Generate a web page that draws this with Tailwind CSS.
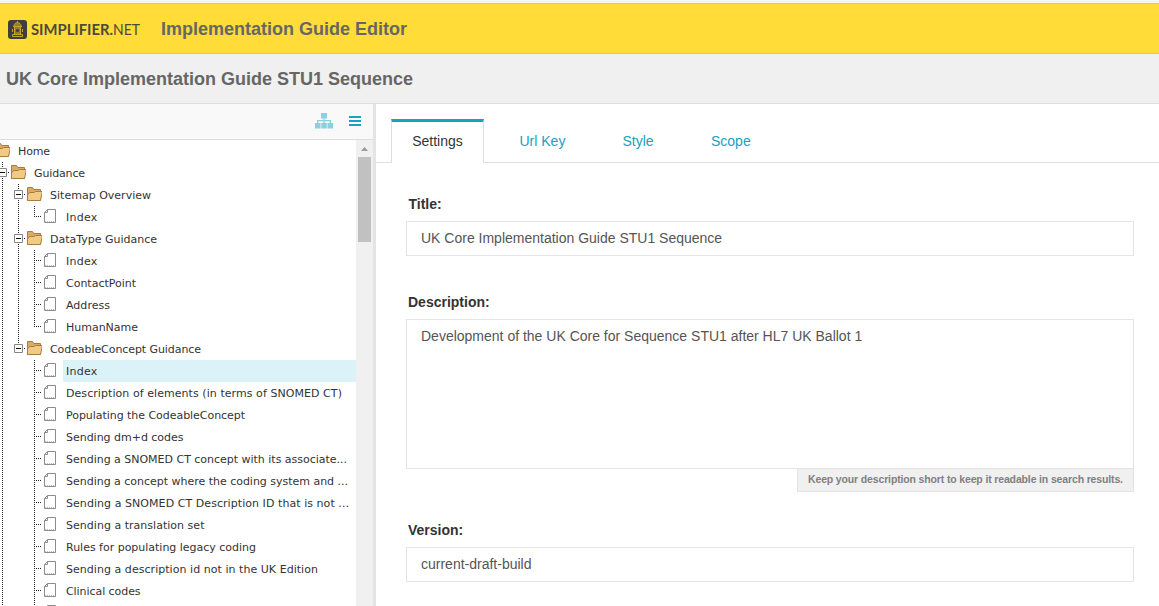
<!DOCTYPE html>
<html lang="en">
<head>
<meta charset="utf-8">
<title>Implementation Guide Editor</title>
<script src="https://cdn.jsdelivr.net/npm/@tailwindcss/browser@4"></script>
</head>
<body class="h-[606px] w-[1159px] overflow-hidden bg-white font-['Liberation_Sans',Arial,sans-serif] text-[#333]">
<svg class="hidden">
  <symbol id="folder" viewBox="0 0 16 22"><path d="M1.500 16.500v-13h5l1.500 2h6.500v11z" fill="#dbab66" stroke="#a67e45"/><path d="M1.500 16.500v-5.500l2-2.500h4.500l1.500-1h7l-2 9z" fill="#f1ca84" stroke="#a67e45"/></symbol>
  <symbol id="doc" viewBox="0 0 16 22"><path d="M5.500 3.500h8v13h-11v-10z" fill="#fff" stroke="#8c8c8c"/><path d="M2.500 6.500h3v-3" fill="none" stroke="#8c8c8c"/><path d="M3 15.500h10" stroke="#bbb" stroke-dasharray="1 1"/></symbol>
  <symbol id="v" viewBox="0 0 16 22"><path d="M8.500 0v22" stroke="#222" stroke-dasharray="1 1" shape-rendering="crispEdges"/></symbol>
  <symbol id="tee" viewBox="0 0 16 22"><path d="M8.500 0v22M10 10.500h6" stroke="#222" stroke-dasharray="1 1" shape-rendering="crispEdges"/></symbol>
  <symbol id="end" viewBox="0 0 16 22"><path d="M8.500 0v11M10 10.500h6" stroke="#222" stroke-dasharray="1 1" shape-rendering="crispEdges"/></symbol>
  <symbol id="box" viewBox="0 0 16 22"><path d="M8.500 0v22M14 10.500h2" stroke="#222" stroke-dasharray="1 1" shape-rendering="crispEdges"/><path d="M4.500 6.500h8v8h-8z" fill="#fff" stroke="#858585"/><path d="M6 10.500h5" stroke="#111"/></symbol>
  <symbol id="boxend" viewBox="0 0 16 22"><path d="M8.500 0v10M14 10.500h2" stroke="#222" stroke-dasharray="1 1" shape-rendering="crispEdges"/><path d="M4.500 6.500h8v8h-8z" fill="#fff" stroke="#858585"/><path d="M6 10.500h5" stroke="#111"/></symbol>
</svg>
<div class="flex h-full flex-col">
  <div class="h-[4px] shrink-0 border-b border-[#c6c4b8] bg-[#f5f5f5]"></div>
  <header class="flex h-[50px] shrink-0 items-center border-b border-[#f0cb26] bg-[#ffdc37] pl-2">
    <svg class="mt-[2px] h-[19px] w-[19px]" viewBox="0 0 19 19"><rect width="19" height="19" rx="3" fill="#3f3e3a"/><path d="M6 6c0-4.500 7-4.500 7 0v8.500H6z" fill="#8f7e2b"/><g fill="none" stroke="#c2a62c"><path d="M6 6c0-4.500 7-4.500 7 0M5 6.500h9M6.500 7v7.500M12.500 7v7.500M4.500 14.500h10v2h-10zM4.500 9v3M14.500 9v3M9.500 1v2"/></g><circle cx="9.500" cy="10.500" r="1.600" fill="#3f3e3a"/></svg>
    <svg class="ml-[4px] h-[20px] w-[109px] overflow-visible font-['Lato',sans-serif] text-[15.500px]" viewBox="0 0 109 20" fill="#4d4a3a"><text x="0" y="16" font-weight="700" textLength="82" lengthAdjust="spacingAndGlyphs">SIMPLIFIER.</text><text x="82" y="16" textLength="27" lengthAdjust="spacingAndGlyphs">NET</text></svg>
    <h1 class="ml-[21px] text-[18px] font-bold leading-[20px] text-[#666]">Implementation Guide Editor</h1>
  </header>
  <div class="flex h-[50px] shrink-0 items-center border-b border-[#dedede] bg-[#f0f0f0] pl-[6px]"><h2 class="text-[18px] font-bold leading-5 text-[#666]">UK Core Implementation Guide STU1 Sequence</h2></div>
  <main class="flex min-h-0 flex-1">
    <aside class="flex w-[376px] shrink-0 flex-col border-r-[3px] border-[#e4e4e4]">
      <div class="flex h-9 shrink-0 items-center border-b border-[#dedede] bg-[#f9f9f9] pl-[315px]">
        <svg class="mt-[-2px] h-[16px] w-[18px]" viewBox="0 0 18 16"><g fill="#8bd0df"><path d="M6 0h6v5.500H6zM0 10h5.500v5.500H0zM6.300 10h5.500v5.500H6.300zM12.500 10H18v5.500h-5.500z"/><path d="M8.500 5h1.200v5H8.500zM2 7h14v1.200H2zM2 7h1.200v3H2zM14.800 7H16v3h-1.200z"/></g></svg>
        <svg class="ml-4 mt-[-2px] h-[10px] w-[12px]" viewBox="0 0 12 10"><path d="M0 0h12v2H0zM0 4h12v2H0zM0 8h12v2H0z" fill="#17a1c3"/></svg>
      </div>
      <div class="flex min-h-0 flex-1">
        <div id="tree" class="w-[356px] overflow-hidden font-['DejaVu_Sans',sans-serif] text-[11px] leading-[24px]"></div>
        <div class="flex w-[17px] flex-col items-center bg-[#f0f0f0] pt-[7px]">
          <svg class="h-[4px] w-[7px]" viewBox="0 0 7 4"><path d="M0 4 3.500 0 7 4z" fill="#9b9b9b"/></svg>
          <div class="mt-[6px] h-[85px] w-[13px] bg-[#c1c1c1]"></div>
        </div>
      </div>
    </aside>
    <section class="min-w-0 flex-1">
      <nav class="flex h-[59px] items-end text-[14px] leading-5 text-[#17a1c3]">
        <div class="h-px w-[15px] bg-[#dedede]"></div>
        <div class="h-[44px] w-[93px] border-x border-t-[3px] border-x-[#dedede] border-t-[#17a1c3] pt-[9px] text-center text-[#333]">Settings</div>
        <div class="flex h-[44px] flex-1 border-b border-[#dedede] pt-3"><span class="ml-[35.500px] w-[103px]">Url Key</span><span class="w-[88.500px]">Style</span><span>Scope</span></div>
      </nav>
      <div class="flex flex-col pl-[30px] pr-[25px] pt-[31px] text-[14px] leading-5 text-[#555]">
        <label class="pl-[2.500px] font-bold text-[#333]">Title:</label>
        <div class="mt-[7px] h-[35px] border border-[#e4e4e4] pl-[14px] pt-[6px]">UK Core Implementation Guide STU1 Sequence</div>
        <label class="mt-9 pl-[2px] font-bold text-[#333]">Description:</label>
        <div class="mt-[7px] h-[150px] border border-[#e4e4e4] pl-[14px] pt-[6px]">Development of the UK Core for Sequence STU1 after HL7 UK Ballot 1</div>
        <div class="-mt-px h-[24px] w-[337px] self-end whitespace-nowrap border border-[#e4e4e4] bg-[#f0f0f0] pl-[10px] text-[10.500px] font-bold leading-[21px] tracking-[-0.145px] text-[#808080]">Keep your description short to keep it readable in search results.</div>
        <label class="mt-7 pl-[2px] font-bold text-[#333]">Version:</label>
        <div class="mt-[7px] h-[35px] border border-[#e4e4e4] pl-[14px] pt-[6px]">current-draft-build</div>
      </div>
    </section>
  </main>
</div>
<script>
  // [guide cells, icon, label, label width, selected]
  const rows = [
    ['', 'folder', 'Home', 32],
    ['box', 'folder', 'Guidance', 51],
    ['v box', 'folder', 'Sitemap Overview', 101],
    ['v v end', 'doc', 'Index', 31.5],
    ['v box', 'folder', 'DataType Guidance', 107],
    ['v v tee', 'doc', 'Index', 31.5],
    ['v v tee', 'doc', 'ContactPoint', 70],
    ['v v tee', 'doc', 'Address', 44],
    ['v v end', 'doc', 'HumanName', 72],
    ['v boxend', 'folder', 'CodeableConcept Guidance', 151],
    ['v none tee', 'doc', 'Index', 31.5, true],
    ['v none tee', 'doc', 'Description of elements (in terms of SNOMED CT)', 276],
    ['v none tee', 'doc', 'Populating the CodeableConcept', 179],
    ['v none tee', 'doc', 'Sending dm+d codes', 117.5],
    ['v none tee', 'doc', 'Sending a SNOMED CT concept with its associate...', 281],
    ['v none tee', 'doc', 'Sending a concept where the coding system and ...', 282],
    ['v none tee', 'doc', 'Sending a SNOMED CT Description ID that is not ...', 283],
    ['v none tee', 'doc', 'Sending a translation set', 138.5],
    ['v none tee', 'doc', 'Rules for populating legacy coding', 190],
    ['v none tee', 'doc', 'Sending a description id not in the UK Edition', 252],
    ['v none tee', 'doc', 'Clinical codes', 74.5],
    ['v none tee', 'doc', '', 0]
  ];
  const ctx = document.createElement('canvas').getContext('2d');
  ctx.font = '11px "DejaVu Sans"';
  const spacing = (label, width) => label ? (width - ctx.measureText(label).width) / label.length : 0;
  const cell = id => `<svg class="h-[22px] w-4 shrink-0 overflow-visible"><use href="#${id}" width="16" height="22"/></svg>`;
  document.getElementById('tree').innerHTML = rows.map(([guides, icon, label, width, on]) =>
    `<div class="-ml-[6px] flex h-[22px] whitespace-nowrap">${guides.split(' ').filter(Boolean).map(cell).join('')}${cell(icon)}<div class="ml-[5px] h-[22px] flex-1 pl-[3px] ${on ? 'bg-[#dbf2f8]' : ''}"><span style="letter-spacing:${spacing(label, width)}px">${label}</span></div></div>`).join('');
</script>
</body>
</html>
